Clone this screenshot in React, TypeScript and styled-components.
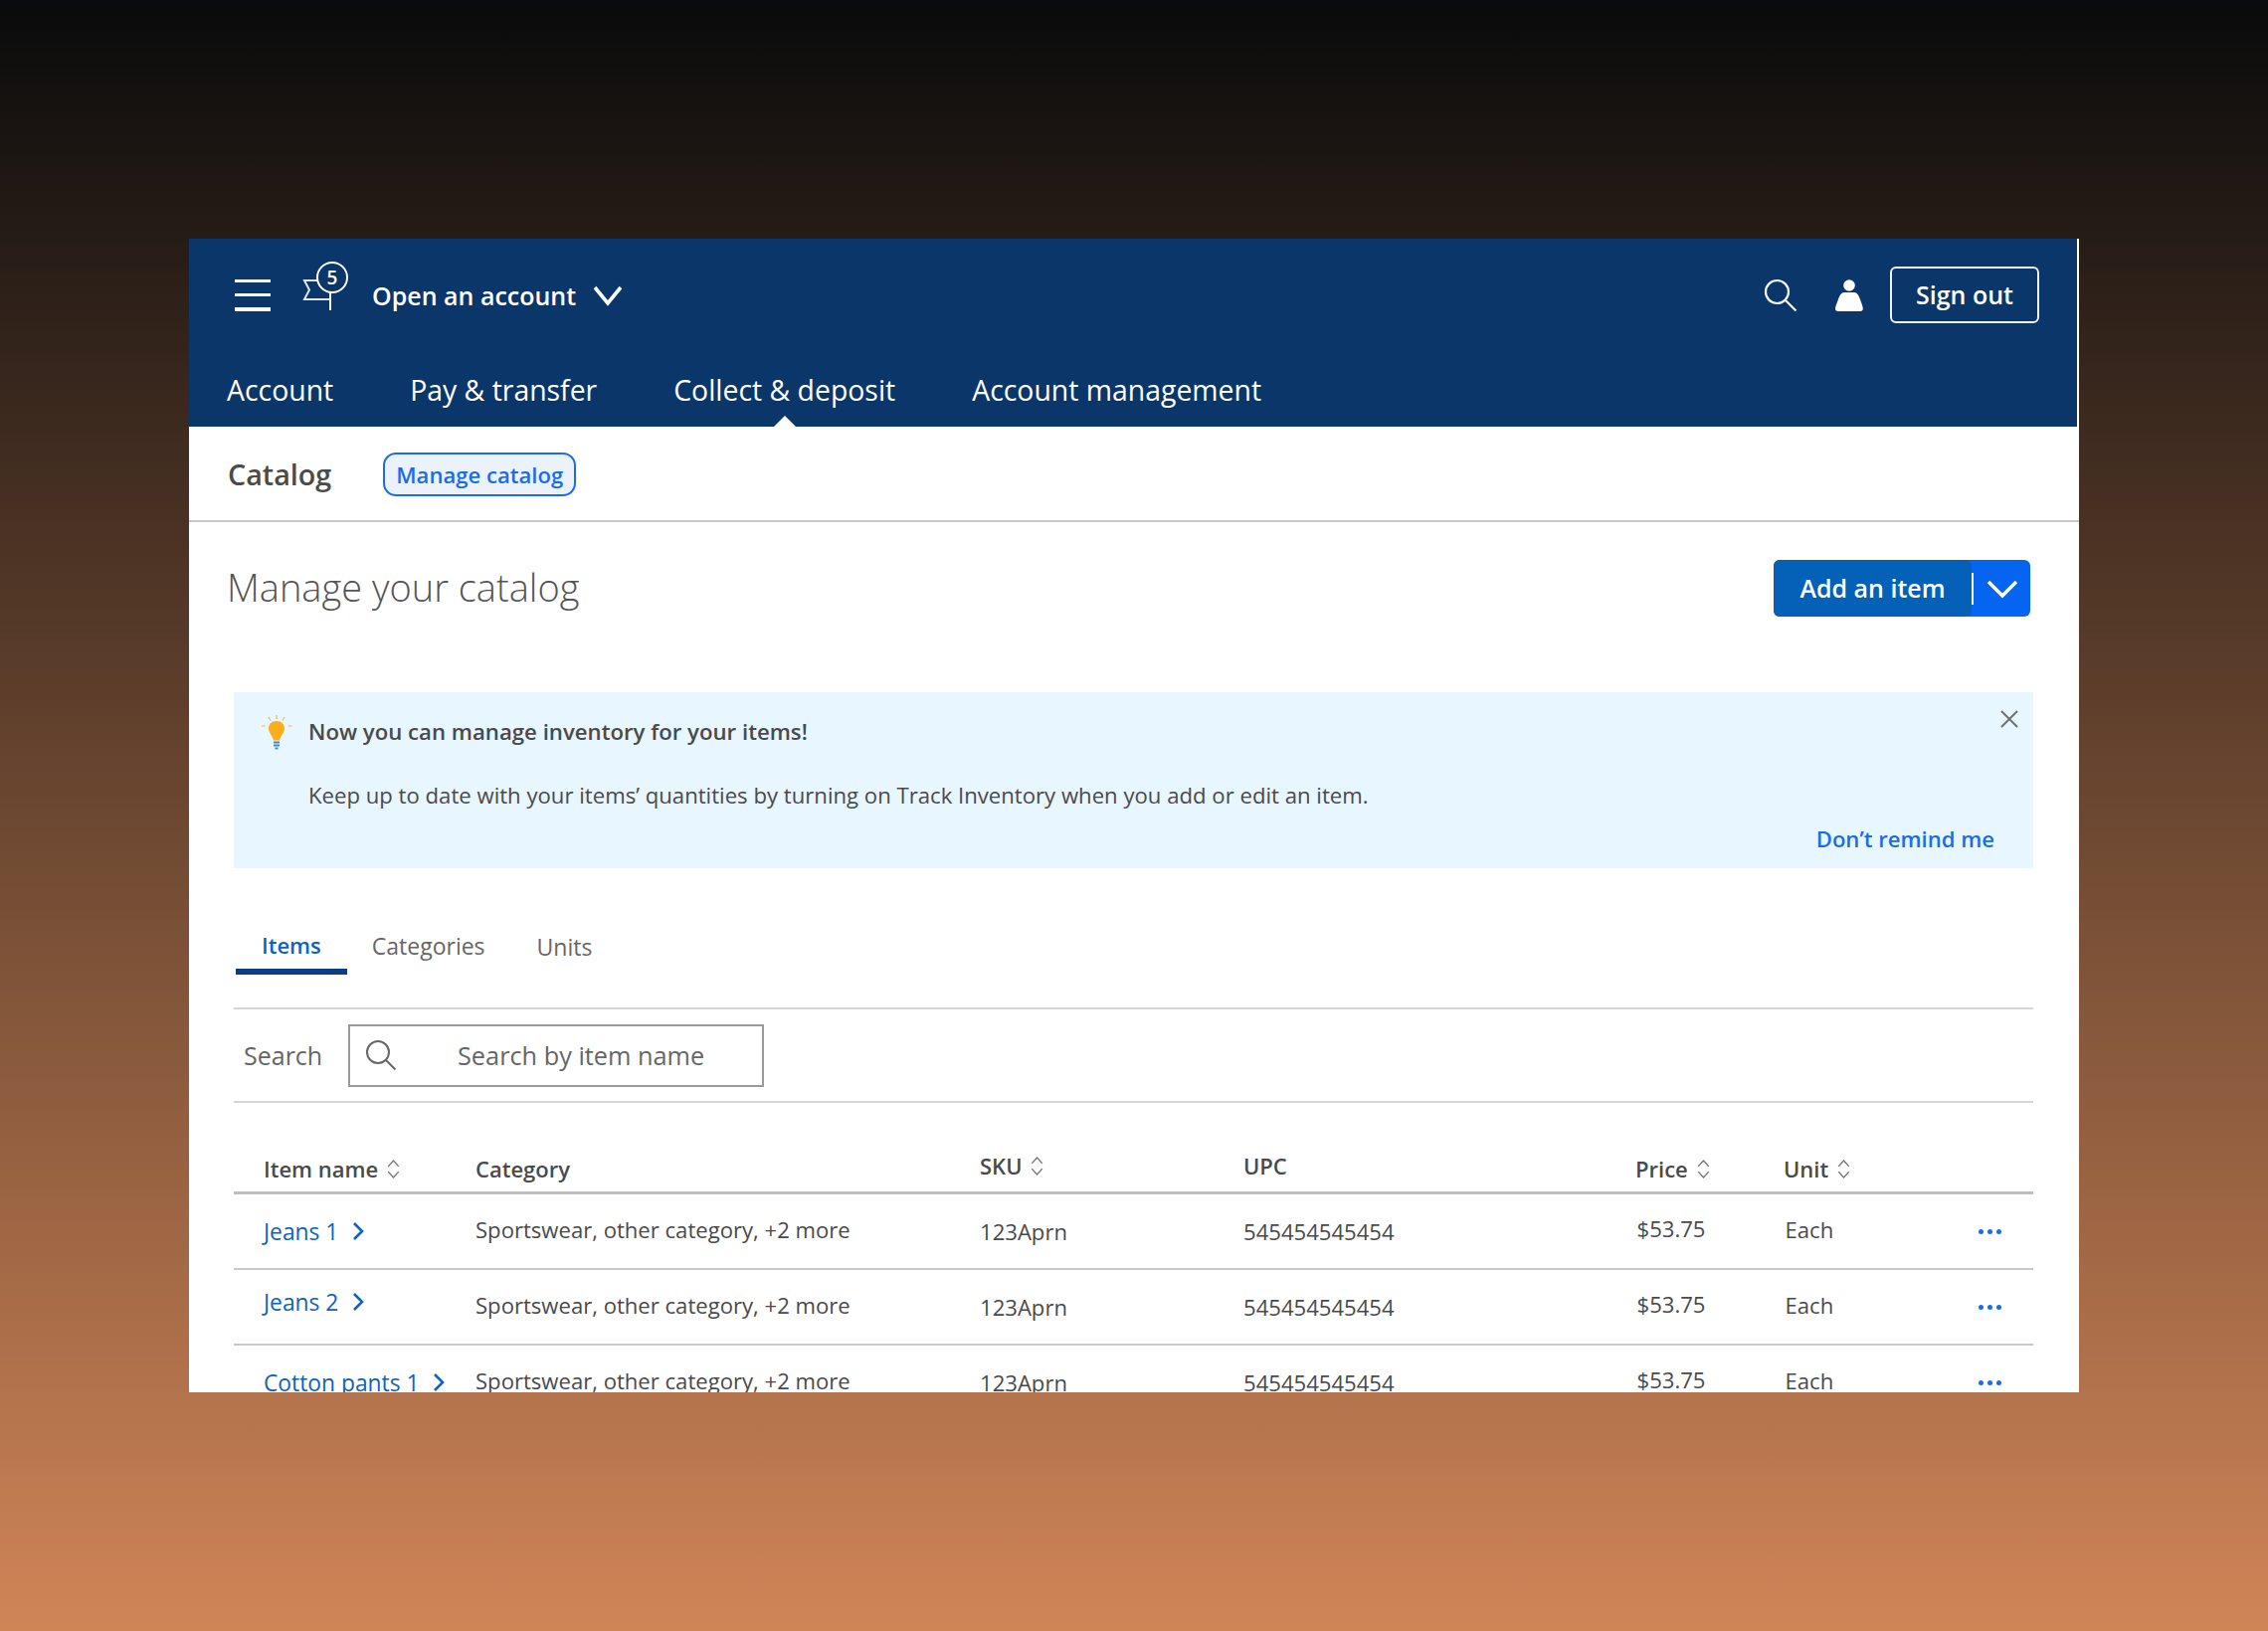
import React from 'react';
import styled, { createGlobalStyle } from 'styled-components';

const navy = '#0b3669';
const link = '#0e62c0';
const brightBlue = '#1a6dea';
const textColor = '#4a4a4a';
const line = '#c8c8c8';

const GlobalStyle = createGlobalStyle`
  html, body { margin: 0; padding: 0; }
  body {
    height: 1640px;
    overflow: hidden;
    font-family: "Open Sans", "Noto Sans", sans-serif;
    background: linear-gradient(180deg, #090a0b 0px, #d08557 1640px);
  }
`;

type Row = { name: string; item: number };

const rows: Row[] = [
  { name: 'Jeans 1', item: 0 },
  { name: 'Jeans 2', item: -5 },
  { name: 'Cotton pants 1', item: 0 },
];

const Sort = () => (
  <SortIcon viewBox="0 0 14 20" fill="none" stroke="#777" strokeWidth="1.4">
    <path d="M2 7.5 7 2l5 5.5M2 12.5 7 18l5-5.5" />
  </SortIcon>
);

const Chevron = () => (
  <ChevronIcon viewBox="0 0 12 20" fill="none" stroke={link} strokeWidth="2.6">
    <path d="M2 2l8 8-8 8" />
  </ChevronIcon>
);

const App: React.FC = () => {
  return (
    <>
      <GlobalStyle />
      <Card>
        <Header>
          <TopBar>
            <Burger>
              <span />
              <span />
              <span />
            </Burger>
            <PinWrap>
              <svg width="48" height="52" viewBox="0 0 48 52" fill="none" stroke="#fff" strokeWidth="2">
                <path d="M17 20H2l5 9.500L2 39h26" stroke="#dfe6ee" />
                <path d="M28 32v18" />
                <circle cx="30" cy="17" r="15" fill={navy} />
              </svg>
              <PinCount>5</PinCount>
            </PinWrap>
            <AccountLabel>Open an account</AccountLabel>
            <svg width="30" height="22" viewBox="0 0 30 22" fill="none" stroke="#fff" strokeWidth="3.600">
              <path d="M2 3l13 16L28 3" />
            </svg>
            <TopRight>
              <svg width="36" height="36" viewBox="0 0 36 36" fill="none" stroke="#f2f4f7" strokeWidth="2.200">
                <circle cx="14.500" cy="14.500" r="11.500" />
                <path d="M23 23l10.500 10.500" />
              </svg>
              <svg width="28" height="32" viewBox="0 0 28 32" fill="#fff">
                <circle cx="14" cy="6" r="5.800" />
                <path d="M9 13h10c3 0 4.500 3 6 7 1.500 4 2.800 7.500 2.800 9.500 0 1.500-1 2.500-2.500 2.500H2.800C1 32 0 31 0 29.500c0-2 1.500-5.500 3-9.500 1.500-4 3-7 6-7z" />
              </svg>
              <SignOut>Sign out</SignOut>
            </TopRight>
          </TopBar>
          <Nav>
            <NavItem>Account</NavItem>
            <NavItem>Pay &amp; transfer</NavItem>
            <NavItem $active>Collect &amp; deposit</NavItem>
            <NavItem>Account management</NavItem>
          </Nav>
        </Header>

        <SubNav>
          <SubTitle>Catalog</SubTitle>
          <Pill>Manage catalog</Pill>
        </SubNav>

        <TitleRow>
          <Title>Manage your catalog</Title>
          <SplitButton>
            <SplitMain>Add an item</SplitMain>
            <SplitDivider />
            <SplitCaret>
              <svg width="32" height="20" viewBox="0 0 32 20" fill="none" stroke="#fff" strokeWidth="3.400">
                <path d="M2 3l14 14L30 3" />
              </svg>
            </SplitCaret>
          </SplitButton>
        </TitleRow>

        <Alert>
          <Close>
            <svg width="18" height="18" viewBox="0 0 18 18" fill="none" stroke="#6f6f6f" strokeWidth="2">
              <path d="M1 1l16 16M17 1L1 17" />
            </svg>
          </Close>
          <AlertHead>
            <svg width="34" height="38" viewBox="0 0 34 38" fill="none">
              <g stroke="#f5b942" strokeWidth="1.200">
                <path d="M17 1v4M9 3l2 3.500M25 3l-2 3.500M2 12h3.500M29 12h3.500" />
              </g>
              <path d="M17 7c5 0 8 3.500 8 7.500 0 4.500-4 7-5 12h-6c-1-5-5-7.500-5-12C9 10.500 12 7 17 7z" fill="#fbad1c" />
              <path d="M14 28.500h6M14 31.500h6M15.500 34.500h3" stroke="#3d8bd8" strokeWidth="2" />
            </svg>
            <AlertTitle>Now you can manage inventory for your items!</AlertTitle>
          </AlertHead>
          <AlertBody>Keep up to date with your items’ quantities by turning on Track Inventory when you add or edit an item.</AlertBody>
          <AlertAction>Don’t remind me</AlertAction>
        </Alert>

        <Content>
          <Tabs>
            <Tab $active>Items</Tab>
            <Tab>Categories</Tab>
            <Tab $lower>Units</Tab>
          </Tabs>
          <SearchRow>
            <SearchLabel>Search</SearchLabel>
            <SearchBox>
              <svg width="32" height="32" viewBox="0 0 32 32" fill="none" stroke="#666" strokeWidth="2">
                <circle cx="13" cy="13" r="11" />
                <path d="M21 21l9.500 9.500" />
              </svg>
              <SearchHint>Search by item name</SearchHint>
            </SearchBox>
          </SearchRow>
          <HeadRow>
            <HeadCell>Item name <Sort /></HeadCell>
            <HeadCell>Category</HeadCell>
            <HeadCell $up>SKU <Sort /></HeadCell>
            <HeadCell $up>UPC</HeadCell>
            <HeadCell>Price <Sort /></HeadCell>
            <HeadCell>Unit <Sort /></HeadCell>
          </HeadRow>
          {rows.map((row) => (
            <TableRow key={row.name}>
              <ItemLink $shift={row.item}>
                {row.name} <Chevron />
              </ItemLink>
              <Cell $shift={-2}>Sportswear, other category, +2 more</Cell>
              <Cell $shift={0}>123Aprn</Cell>
              <Cell $shift={0}>545454545454</Cell>
              <Cell $shift={-3} $inset>$53.75</Cell>
              <Cell $shift={-2} $inset>Each</Cell>
              <Dots>
                <i />
                <i />
                <i />
              </Dots>
            </TableRow>
          ))}
        </Content>
      </Card>
    </>
  );
};
export default App;

const Card = styled.div`
  position: absolute;
  left: 190px;
  top: 240px;
  width: 1900px;
  height: 1160px;
  overflow: hidden;
  background: #fff;
  color: ${textColor};
`;

const Header = styled.div`
  height: 189px;
  margin-right: 2px;
  background: ${navy};
  color: #fff;
`;

const TopBar = styled.div`
  display: flex;
  align-items: center;
  height: 113px;
  padding: 0 38px 0 46px;
`;

const Burger = styled.div`
  display: flex;
  flex-direction: column;
  justify-content: space-between;
  width: 36px;
  height: 32px;
  margin-right: 32px;
  span {
    height: 3.5px;
    background: #fff;
  }
`;

const PinWrap = styled.div`
  position: relative;
  width: 48px;
  height: 52px;
  margin: -17px 22px 0 0;
`;

const PinCount = styled.span`
  position: absolute;
  left: 15px;
  top: 4px;
  width: 30px;
  text-align: center;
  font-size: 19px;
  font-weight: 600;
  line-height: 26px;
  color: #fff;
`;

const AccountLabel = styled.span`
  font-size: 25px;
  font-weight: 600;
  margin-right: 17px;
`;

const TopRight = styled.div`
  display: flex;
  align-items: center;
  margin-left: auto;
  gap: 37px;
`;

const SignOut = styled.button`
  width: 150px;
  height: 57px;
  margin-left: -10px;
  padding-bottom: 2px;
  border: 2px solid #f0f2f5;
  border-radius: 6px;
  background: transparent;
  color: #fff;
  font: 600 25px "Open Sans", sans-serif;
`;

const Nav = styled.div`
  display: flex;
  gap: 77px;
  height: 76px;
  padding-left: 38px;
`;

const NavItem = styled.div<{ $active?: boolean }>`
  position: relative;
  font-size: 28.400px;
  line-height: 78px;
  &::after {
    content: '';
    display: ${(props) => (props.$active ? 'block' : 'none')};
    position: absolute;
    left: 50%;
    bottom: 0;
    margin-left: -11px;
    border: 11px solid transparent;
    border-top: 0;
    border-bottom-color: #fff;
  }
`;

const SubNav = styled.div`
  display: flex;
  align-items: center;
  gap: 52px;
  height: 94px;
  padding-left: 39px;
  border-bottom: 2px solid ${line};
`;

const SubTitle = styled.div`
  font-size: 28.700px;
  font-weight: 600;
`;

const Pill = styled.div`
  display: flex;
  align-items: center;
  height: 40px;
  margin-top: 1px;
  padding: 0 11px;
  border: 2px solid ${brightBlue};
  border-radius: 13px;
  background: #ebf2fc;
  color: ${brightBlue};
  font-size: 22.100px;
  font-weight: 600;
`;

const TitleRow = styled.div`
  display: flex;
  justify-content: space-between;
  align-items: center;
  padding: 38px 49px 0 38px;
`;

const Title = styled.h1`
  margin: -3px 0 0;
  font-size: 38px;
  font-weight: 300;
  color: #555;
`;

const SplitButton = styled.div`
  display: flex;
  align-items: center;
  width: 258px;
  height: 57px;
  border-radius: 6px;
  overflow: hidden;
  background: #0565f0;
`;

const SplitMain = styled.div`
  display: flex;
  align-items: center;
  justify-content: center;
  width: 199px;
  height: 100%;
  padding-bottom: 2px;
  box-sizing: border-box;
  border-radius: 0 6px 6px 0;
  background: #0560b8;
  color: #fff;
  font-size: 25px;
  font-weight: 600;
`;

const SplitDivider = styled.div`
  width: 2px;
  height: 32px;
  background: #fff;
`;

const SplitCaret = styled.div`
  display: flex;
  flex: 1;
  justify-content: center;
`;

const Alert = styled.div`
  position: relative;
  height: 177px;
  margin: 76px 46px 0 45px;
  padding: 22px 0 0 26px;
  box-sizing: border-box;
  background: #e8f6ff;
`;

const Close = styled.div`
  position: absolute;
  top: 18px;
  right: 15px;
  line-height: 0;
`;

const AlertHead = styled.div`
  display: flex;
  align-items: center;
  gap: 15px;
`;

const AlertTitle = styled.div`
  margin-top: -3px;
  font-size: 22.200px;
  font-weight: 600;
`;

const AlertBody = styled.div`
  margin: 28px 0 0 49px;
  font-size: 22.150px;
`;

const AlertAction = styled.div`
  margin: 14px 39px 0 0;
  text-align: right;
  color: ${brightBlue};
  font-size: 22.100px;
  font-weight: 600;
`;

const Content = styled.div`
  margin: 0 46px 0 45px;
`;

const Tabs = styled.div`
  display: flex;
  height: 140px;
  padding: 62px 0 0 2px;
  box-sizing: border-box;
  gap: 24px;
`;

const Tab = styled.div<{ $active?: boolean; $lower?: boolean }>`
  height: 45px;
  box-sizing: border-box;
  padding: ${(props) => (props.$lower ? '1px' : '0')} ${(props) => (props.$active ? '26px' : '0')} 0;
  border-bottom: ${(props) => (props.$active ? '6px solid #0b3f85' : '0')};
  margin-right: ${(props) => (props.$lower ? '0' : props.$active ? '1px' : '28px')};
  font-size: ${(props) => (props.$active ? '22px' : '23px')};
  font-weight: ${(props) => (props.$active ? 600 : 500)};
  color: ${(props) => (props.$active ? link : '#666')};
`;

const SearchRow = styled.div`
  display: flex;
  align-items: center;
  height: 92px;
  padding-left: 10px;
  border-top: 2px solid #d6d6d6;
  border-bottom: 2px solid #d6d6d6;
`;

const SearchLabel = styled.div`
  width: 105px;
  font-size: 25px;
  color: #666;
`;

const SearchBox = styled.div`
  display: flex;
  align-items: center;
  gap: 61px;
  width: 418px;
  height: 63px;
  box-sizing: border-box;
  padding-left: 15px;
  border: 2px solid #9a9a9a;
`;

const SearchHint = styled.div`
  font-size: 25.300px;
  color: #666;
`;

const columns = '213px 507px 265px 394px 149px 1fr 55px';

const HeadRow = styled.div`
  display: grid;
  grid-template-columns: ${columns};
  align-items: center;
  height: 92px;
  padding: 43px 0 0 30px;
  box-sizing: border-box;
  border-bottom: 3px solid #bdbdbd;
`;

const HeadCell = styled.div<{ $up?: boolean }>`
  display: flex;
  align-items: center;
  gap: 8px;
  font-size: 22px;
  font-weight: 600;
  transform: translateY(${(props) => (props.$up ? '-3px' : '0')});
`;

const SortIcon = styled.svg`
  width: 15px;
  height: 21px;
`;

const TableRow = styled.div`
  display: grid;
  grid-template-columns: ${columns};
  align-items: center;
  height: 76px;
  padding-left: 30px;
  box-sizing: border-box;
  border-bottom: 2px solid ${line};
`;

const Cell = styled.div<{ $shift: number; $inset?: boolean }>`
  padding-left: ${(props) => (props.$inset ? '1.500px' : '0')};
  font-size: 22.100px;
  transform: translateY(${(props) => props.$shift}px);
`;

const ItemLink = styled(Cell)`
  display: flex;
  align-items: center;
  gap: 14px;
  color: ${link};
  font-size: 22.800px;
  font-weight: 500;
`;

const ChevronIcon = styled.svg`
  width: 12px;
  height: 20px;
`;

const Dots = styled.div`
  display: flex;
  gap: 4px;
  i {
    width: 5px;
    height: 5px;
    border-radius: 50%;
    background: ${brightBlue};
  }
`;
